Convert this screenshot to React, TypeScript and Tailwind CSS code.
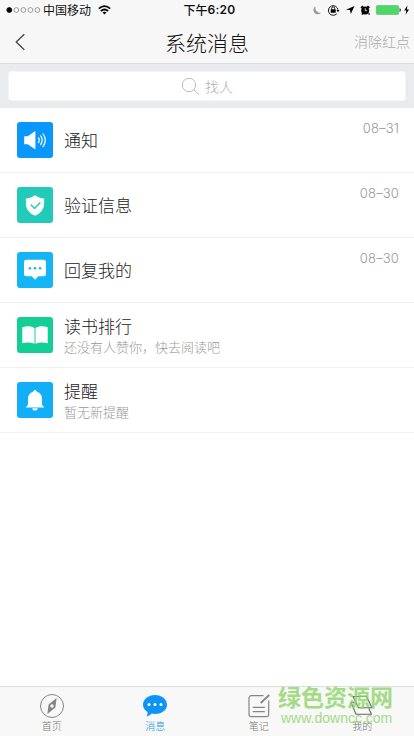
import React from 'react';

interface Message {
    title: string;
    detail?: string;
    date?: string;
    color: string;
    icon: React.ReactNode;
}

const SpeakerIcon = () => (
    <svg viewBox="0 0 36 36" className="w-9 h-9" fill="none">
        <path d="M7.2 14.2h3.6L18.4 9v18.6l-7.600-5.400H7.200z" fill="white" />
        <path d="M21.200 15.500q2.200 2.700 0 5.600M23.400 13.500q3.600 4.600 0 9.500M25.800 11.500q5 6.600 0 13.500" stroke="white" strokeWidth="1.200" />
    </svg>
);

const ShieldIcon = () => (
    <svg viewBox="0 0 36 36" className="w-9 h-9" fill="none">
        <path d="M18 8.200c2.600 2 5.600 3.100 9.100 3.400v5.200c0 5.500-3.400 9.600-9.100 12-5.700-2.400-9.100-6.500-9.100-12v-5.200c3.500-.3 6.500-1.400 9.100-3.400z" fill="white" />
        <path d="m13.700 17.600 3.800 3.800 5.800-5.800" stroke="#22cbb9" strokeWidth="1.400" />
    </svg>
);

const ReplyIcon = () => (
    <svg viewBox="0 0 36 36" className="w-9 h-9">
        <path d="M9.500 7.800h17a2.500 2.500 0 0 1 2.500 2.500v11.500a2.500 2.500 0 0 1-2.500 2.500h-5.200L18 27.800l-3.300-3.500H9.500A2.500 2.500 0 0 1 7 21.800V10.300a2.500 2.500 0 0 1 2.500-2.500z" fill="white" />
        <g fill="#13b5f5">
            <circle cx="12.900" cy="16.200" r="1.300" />
            <circle cx="18" cy="16.200" r="1.300" />
            <circle cx="23.100" cy="16.200" r="1.300" />
        </g>
    </svg>
);

const BookIcon = () => (
    <svg viewBox="0 0 36 36" className="w-9 h-9" fill="white">
        <path d="M5.300 10.200c4.700-1.500 8.800-1.200 12.200.8v15.800c-3.600-1.600-7.700-1.700-12.200-.6z" />
        <path d="M30.700 10.200c-4.700-1.500-8.800-1.200-12.200.8v15.800c3.600-1.600 7.700-1.700 12.200-.6z" />
    </svg>
);

const BellIcon = () => (
    <svg viewBox="0 0 36 36" className="w-9 h-9" fill="white">
        <path d="M18 8.200c1.100 0 1.800.7 1.900 1.500 3.200.9 5.100 3.400 5.100 6.900v5.100c0 1.400.7 2.200 2 3v.9H9v-.9c1.300-.8 2-1.600 2-3v-5.100c0-3.500 1.900-6 5.100-6.900.1-.8.800-1.500 1.900-1.500z" />
        <path d="M15.200 26.300h5.600c-.3 1.500-1.300 2.300-2.800 2.300s-2.500-.8-2.800-2.300z" />
    </svg>
);

const messages: Message[] = [
    { title: '通知', date: '08-31', color: 'bg-[#0a97fb]', icon: <SpeakerIcon /> },
    { title: '验证信息', date: '08-30', color: 'bg-[#22cbb9]', icon: <ShieldIcon /> },
    { title: '回复我的', date: '08-30', color: 'bg-[#13b5f5]', icon: <ReplyIcon /> },
    { title: '读书排行', detail: '还没有人赞你，快去阅读吧', color: 'bg-[#14ce97]', icon: <BookIcon /> },
    { title: '提醒', detail: '暂无新提醒', color: 'bg-[#13aef8]', icon: <BellIcon /> },
];

const StatusBar = () => (
    <div className="h-5 grid grid-cols-[1fr_auto_1fr] items-center text-[12px] leading-5 text-[#111]">
        <div className="flex items-center pl-1.5">
            <svg width="36" height="8" viewBox="0 0 36 8" fill="none" stroke="#777" strokeWidth="0.7">
                <circle cx="3.300" cy="4" r="2.500" fill="black" stroke="black" />
                <circle cx="10.400" cy="4" r="2.400" />
                <circle cx="17.400" cy="4" r="2.400" />
                <circle cx="24.400" cy="4" r="2.400" />
                <circle cx="31.400" cy="4" r="2.400" />
            </svg>
            <span className="ml-[1px] font-normal">中国移动</span>
            <svg width="13" height="10" viewBox="0 0 13 10" className="ml-[7px]" fill="none" stroke="black" strokeWidth="1.700">
                <path d="M.8 3.700q5.700-5 11.400 0M2.900 6q3.600-3 7.200 0" />
                <path d="M4.500 7.500q2-1.500 4 0l-2 2z" fill="black" stroke="none" />
            </svg>
        </div>
        <div className="flex items-center font-medium pl-[5px]">
            <span>下午</span>
            <span className="font-['Inter'] font-semibold text-[12px] tracking-[0.3px]">6:20</span>
        </div>
        <svg width="102" height="14" viewBox="0 0 102 14" className="justify-self-end">
            <path d="M3.600 3.200a4.300 4.300 0 1 0 5.400 6.500 4.900 4.900 0 0 1-5.400-6.500z" fill="#999" />
            <g fill="none" stroke="black" strokeWidth="0.900">
                <path d="M24.800 10.700a4.800 4.800 0 1 1 1.200-3.700" />
                <path d="M19.700 6.500V5.300a1.500 1.500 0 0 1 3 0v1.200" />
            </g>
            <path d="M18.700 6.300h5v3.500h-5zM24.500 6.900h3l-1.500 2.300zM42.500 3l-3.700 8-.8-3.900-4-.4z" fill="black" />
            <circle cx="53.200" cy="7.500" r="4" fill="black" />
            <path d="m49 4.900 2-1.900m4.400 0 2 1.900m-6.600 5.500-1 1.200m6.800-1.200 1 1.200" stroke="black" strokeWidth="1.500" />
            <path d="M53.200 5.100v2.600h1.900" stroke="white" strokeWidth="0.800" fill="none" />
            <rect x="64.300" y="2.500" width="22.400" height="9" rx="1" fill="#4cd864" stroke="#62a66c" strokeWidth="0.500" />
            <path d="M87.600 5.300h.6q1.200 1.700 0 3.500h-.6z" fill="black" />
            <path d="m95.400 2.600-3.200 5h2.200l-.8 4.100 3.400-5.300h-2.100z" fill="black" />
        </svg>
    </div>
);

const MessageRow: React.FC<{ message: Message }> = ({ message }) => (
    <li className="h-[65px] flex items-center pl-[17px] pr-[15px] border-b border-[#f0f0f0]">
        <div className={`w-9 h-9 rounded-[3px] shrink-0 ${message.color}`}>{message.icon}</div>
        <div className="ml-[11px] grow">
            <div className="text-[17px] leading-6 font-light text-[#222]">{message.title}</div>
            {message.detail && (
                <div className="text-[13px] leading-[18px] font-light text-[#999]">{message.detail}</div>
            )}
        </div>
        {message.date && (
            <span className="self-start mt-[11px] font-['Inter'] font-light text-[13px] leading-[18px] tracking-[0.150px] text-[#999]">
                {message.date.replace('-', '–')}
            </span>
        )}
    </li>
);

const TabBar = () => (
    <nav className="relative h-[50px] grid grid-cols-4 bg-[#f8f8f8] border-t border-[#dfdfdf] text-[10px] leading-[14px] font-light text-[#777]">
        <div className="flex flex-col items-center pt-[6px]">
            <svg width="26" height="26" viewBox="0 0 26 26" fill="none" stroke="#858585">
                <circle cx="13" cy="13" r="11.500" />
                <path d="m17.600 5-1.200 9.500-8 6.500 1.200-9.500z" fill="#858585" stroke="none" />
                <circle cx="13" cy="13" r="1.700" fill="#f8f8f8" stroke="none" />
            </svg>
            <span>首页</span>
        </div>
        <div className="flex flex-col items-center pt-[6px] text-[#1296e8]">
            <svg width="26" height="26" viewBox="0 0 26 26">
                <path d="M13 2C19.800 2 25 6.300 25 11.700s-5.200 9.200-12 9.200c-1.200 0-2.300-.1-3.300-.4-1.300 1.500-3.100 2.500-5.100 2.900.7-1.200 1-2.700.9-4.500C2.700 17.200 1 14.800 1 11.700 1 6.300 6.200 2 13 2z" fill="#0e94f6" />
                <g fill="white">
                    <circle cx="7" cy="11.500" r="1.500" />
                    <circle cx="13" cy="11.500" r="1.500" />
                    <circle cx="19" cy="11.500" r="1.500" />
                </g>
            </svg>
            <span>消息</span>
        </div>
        <div className="flex flex-col items-center pt-[6px]">
            <svg width="26" height="26" viewBox="0 0 26 26" fill="none" stroke="#858585" strokeWidth="1.200">
                <path d="M17.500 2.700H5.200A2.200 2.200 0 0 0 3 4.900v16.600a2.200 2.200 0 0 0 2.200 2.200h15.300a2.200 2.200 0 0 0 2.200-2.200V7.500" />
                <path d="M6.700 14.400h12.100M6.700 18.600h12.100" />
                <path d="m14.700 10 8.500-8" strokeWidth="1.800" />
            </svg>
            <span>笔记</span>
        </div>
        <div className="flex flex-col items-center pt-[6px]">
            <svg width="26" height="26" viewBox="0 0 26 26" fill="none" stroke="#666" strokeWidth="1.100" strokeLinejoin="round">
                <path d="M4 3.500h13.500l5.500 11.300H9.500z" />
                <path d="M5.500 9.500H2l5 11.700h15.500l-2.700-6" />
            </svg>
            <span>我的</span>
        </div>
        <div className="absolute left-[278px] top-[-4px] text-[#8fd46a] opacity-80 whitespace-nowrap">
            <div className="text-[23px] leading-[27px] font-bold">绿色资源网</div>
            <div className="ml-[3px] font-['Liberation_Sans'] font-normal text-[14px] leading-4">www.downcc.com</div>
        </div>
    </nav>
);

export default function App() {
    return (
        <div className="w-[414px] h-[736px] flex flex-col overflow-hidden bg-white font-['Noto_Sans_CJK_SC',sans-serif]">
            <header className="h-16 shrink-0 bg-[#f7f7f7] border-b border-[#dcdddf]">
                <StatusBar />
                <div className="h-[43px] grid grid-cols-[1fr_auto_1fr] items-center">
                    <svg width="10" height="18" viewBox="0 0 10 18" className="ml-[15px]" fill="none" stroke="#444" strokeWidth="1.300">
                        <path d="M9.300 1.200 1.200 9l8.100 7.800" />
                    </svg>
                    <h1 className="text-[21px] leading-8 font-light text-[#111]">系统消息</h1>
                    <span className="justify-self-end pr-1 text-[14px] font-light text-[#aaa]">消除红点</span>
                </div>
            </header>
            <div className="h-11 shrink-0 bg-[#e9ebed] px-2 pt-[7px]">
                <div className="h-[30px] flex items-center justify-center gap-[5px] rounded-[3px] border border-[#f4f5f6] bg-white text-[14px] font-light text-[#b0b0b0]">
                    <svg width="19" height="19" viewBox="0 0 19 19" fill="none" stroke="#bbb">
                        <circle cx="8" cy="8" r="6.700" />
                        <path d="m13 13 5 4.500" />
                    </svg>
                    <span>找人</span>
                </div>
            </div>
            <ul className="grow">
                {messages.map(message => (
                    <MessageRow key={message.title} message={message} />
                ))}
            </ul>
            <TabBar />
        </div>
    );
}
